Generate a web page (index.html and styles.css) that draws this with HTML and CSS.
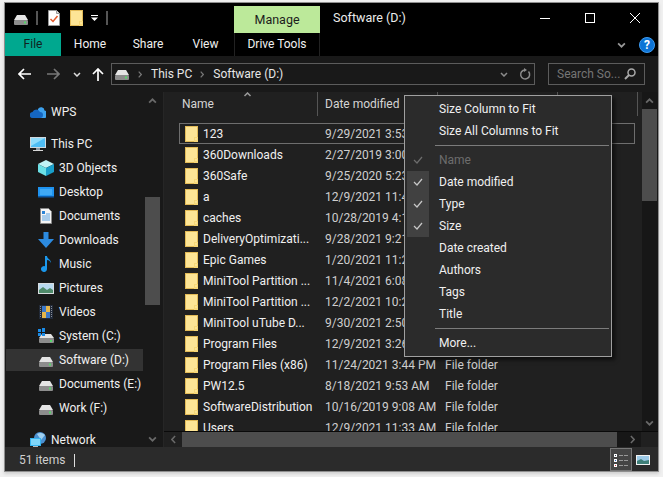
FILE: index.html
```html
<!DOCTYPE html>
<html lang="en">
<head>
<meta charset="utf-8">
<title>Software (D:)</title>
<link rel="stylesheet" href="styles.css">
</head>
<body>
<svg class="defs" xmlns="http://www.w3.org/2000/svg">
  <symbol id="folder" viewBox="0 0 13 16"><rect width="13" height="16" fill="#e3bb57"/><rect x="1" y="1" width="11" height="14" fill="#fde596"/><path d="M9 11h4v5H9z" fill="#f7d878"/><path d="M10 12h2v2h-2z" fill="#fde596"/></symbol>
  <symbol id="drive" viewBox="0 0 14 10"><path d="M3 0h8l3 5H0z" fill="#e4e4e4"/><rect y="5" width="14" height="5" rx="1" fill="#8d8d8d"/><rect x="10" y="6.5" width="2" height="2" fill="#57d86a"/></symbol>
  <symbol id="chev" viewBox="0 0 8 5"><path d="M1 1l3 3 3-3" fill="none" stroke="currentColor" stroke-width="1.5"/></symbol>
  <symbol id="crumb" viewBox="0 0 4 7"><path d="M.7.7l2.6 2.8L.7 6.3" fill="none" stroke="currentColor" stroke-width="1.2"/></symbol>
  <symbol id="check" viewBox="0 0 10 8"><path d="M1 4l3 3 5-6" fill="none" stroke="currentColor" stroke-width="1.2"/></symbol>
</svg>

<div class="window">
  <header class="titlebar">
    <div class="qat">
      <svg class="drive"><use href="#drive"/></svg>
      <span class="qat-sep"></span>
      <svg class="qat-doc" viewBox="0 0 12 16"><path d="M.5.5h8l3 3v12H.5z" fill="#fff" stroke="#999"/><path d="M8.5.5v3h3" fill="#ddd" stroke="#999"/><path d="M2.5 9l2.5 2.5L9.500 6" fill="none" stroke="#e2582a" stroke-width="1.500"/></svg>
      <svg class="folder qat-folder"><use href="#folder"/></svg>
      <svg class="qat-drop" viewBox="0 0 7 6"><path d="M0 0h7v1H0z" fill="#fff"/><path d="M0 2.500h7L3.500 6z" fill="#fff"/></svg>
      <span class="qat-sep"></span>
    </div>
    <div class="manage">Manage</div>
    <div class="title">Software (D:)</div>
    <div class="controls">
      <span class="ctl"><svg class="ctl-ic" viewBox="0 0 10 10"><path d="M0 5.500h10" stroke="#fff"/></svg></span>
      <span class="ctl"><svg class="ctl-ic" viewBox="0 0 10 10"><rect x=".5" y=".5" width="9" height="9" fill="none" stroke="#fff"/></svg></span>
      <span class="ctl"><svg class="ctl-ic" viewBox="0 0 10 10"><path d="M0 0l10 10M10 0L0 10" stroke="#fff"/></svg></span>
    </div>
  </header>

  <nav class="tabs">
    <span class="tab tab-file">File</span>
    <span class="tab">Home</span>
    <span class="tab">Share</span>
    <span class="tab tab-view">View</span>
    <span class="tab tab-ctx">Drive Tools</span>
    <span class="tabs-right">
      <svg class="ribbon-chev"><use href="#chev"/></svg>
      <span class="help">?</span>
    </span>
  </nav>

  <div class="addressbar">
    <svg class="nav-ic back" viewBox="0 0 13 12"><path d="M6 1L1 6l5 5M1 6h12" fill="none" stroke="#fff" stroke-width="1.700"/></svg>
    <svg class="nav-ic forward" viewBox="0 0 13 12"><path d="M7 1l5 5-5 5M12 6H0" fill="none" stroke="#777" stroke-width="1.700"/></svg>
    <svg class="recent"><use href="#chev"/></svg>
    <svg class="nav-ic up" viewBox="0 0 12 13"><path d="M1 6l5-5 5 5M6 1v12" fill="none" stroke="#fff" stroke-width="1.700"/></svg>
    <div class="address">
      <svg class="drive"><use href="#drive"/></svg>
      <svg class="crumb crumb-a"><use href="#crumb"/></svg>
      <span class="crumb-text">This PC</span>
      <svg class="crumb crumb-b"><use href="#crumb"/></svg>
      <span class="crumb-text">Software (D:)</span>
      <svg class="addr-chev"><use href="#chev"/></svg>
      <svg class="refresh" viewBox="0 0 12 13"><path d="M9.500 3.500a4.500 4.500 0 1 1-3.500-1.500" fill="none" stroke="#8c8c8c" stroke-width="1.500"/><path d="M5 0v4l3-2z" fill="#8c8c8c"/></svg>
    </div>
    <div class="search">
      <span>Search So...</span>
      <svg class="mag" viewBox="0 0 12 12"><circle cx="7.500" cy="4.500" r="3.500" fill="none" stroke="#aaa" stroke-width="1.500"/><path d="M5 7l-4 4" stroke="#aaa" stroke-width="2"/></svg>
    </div>
  </div>

  <div class="main">
    <aside class="nav">
      <div class="tree">
        <div class="item root">
          <svg class="ic" viewBox="0 0 16 12"><path d="M8 3a3.500 3.500 0 0 1 6.500 1.500A3.500 3.500 0 0 1 13 12H6z" fill="#3da1ee"/><path d="M3 12a3 3 0 0 1-.5-6A4 4 0 0 1 10 6a3 3 0 0 1 0 6z" fill="#1566c2"/></svg>
          <span>WPS</span>
        </div>
        <div class="item root gap">
          <svg class="ic" viewBox="0 0 16 16"><rect y="1" width="16" height="11" fill="#cfd8de"/><rect x="1" y="2" width="14" height="9" fill="#4fbdf4"/><path d="M1 2h14L1 10z" fill="#8fdcfb"/><path d="M6 12h4v2H6z" fill="#8d9aa3"/><path d="M3 14h10v1H3z" fill="#d8d8d8"/></svg>
          <span>This PC</span>
        </div>
        <div class="item child">
          <svg class="ic" viewBox="0 0 16 16"><path d="M8 0l8 4-8 4-8-4z" fill="#c2f3f6"/><path d="M0 4l8 4v8l-8-4z" fill="#6be0e6"/><path d="M16 4L8 8v8l8-4z" fill="#199fca"/></svg>
          <span>3D Objects</span>
        </div>
        <div class="item child">
          <svg class="ic" viewBox="0 0 16 16"><rect y="3" width="16" height="10" fill="#1e93f0"/><rect y="12" width="16" height="1.500" fill="#0c5aa8"/><path d="M2 5h12v6H2z" fill="#3fa9f5"/></svg>
          <span>Desktop</span>
        </div>
        <div class="item child">
          <svg class="ic" viewBox="0 0 16 16"><path d="M2.500.5h8l3 3v12h-11z" fill="#f4f4f4" stroke="#888"/><path d="M4 3h3v3H4z" fill="#2a83d6"/><path d="M8 6h4M4 8h8M4 10h8M4 12h8" stroke="#5da4e2"/></svg>
          <span>Documents</span>
        </div>
        <div class="item child">
          <svg class="ic" viewBox="0 0 16 16"><path d="M5.500 0h5v7H16l-8 9-8-9h5.500z" fill="#2c8be0"/></svg>
          <span>Downloads</span>
        </div>
        <div class="item child">
          <svg class="ic" viewBox="0 0 16 16"><path d="M7 0h2c0 3 4 3 4 7-1-2-2-3-4-3v9a3 3 0 1 1-2-2.800z" fill="#1b97ea"/></svg>
          <span>Music</span>
        </div>
        <div class="item child">
          <svg class="ic" viewBox="0 0 16 16"><rect y="3" width="16" height="11" fill="#d8dde0"/><rect x="1" y="4" width="14" height="9" fill="#b8d9ee"/><path d="M1 10l4-3 4 3 3-2 3 2v3H1z" fill="#4f8a6a"/></svg>
          <span>Pictures</span>
        </div>
        <div class="item child">
          <svg class="ic" viewBox="0 0 16 16"><rect x="1" y="1" width="14" height="14" fill="#222a38"/><rect x="4" y="2" width="4" height="6" fill="#3c78c8"/><rect x="8" y="2" width="4" height="6" fill="#e5b54a"/><rect x="4" y="8" width="4" height="6" fill="#e5b54a"/><rect x="8" y="8" width="4" height="6" fill="#3c78c8"/><path d="M2.500 2v12M13.500 2v12" stroke="#8a8f99" stroke-dasharray="1 1"/></svg>
          <span>Videos</span>
        </div>
        <div class="item child">
          <svg class="ic" viewBox="0 0 16 16"><path d="M4 6h9l3 4H1z" fill="#e4e4e4"/><rect x="1" y="10" width="15" height="5" rx="1" fill="#8d8d8d"/><rect x="12" y="12" width="2" height="2" fill="#57d86a"/><path d="M0 1h3v3H0zM4 0h3v4H4zM0 5h3v3H0zM4 5h3v3H4z" fill="#1a8ce8"/></svg>
          <span>System (C:)</span>
        </div>
        <div class="item child selected">
          <svg class="ic"><use href="#drive" x="1" y="5" width="14" height="10"/></svg>
          <span>Software (D:)</span>
        </div>
        <div class="item child">
          <svg class="ic"><use href="#drive" x="1" y="5" width="14" height="10"/></svg>
          <span>Documents (E:)</span>
        </div>
        <div class="item child">
          <svg class="ic"><use href="#drive" x="1" y="5" width="14" height="10"/></svg>
          <span>Work (F:)</span>
        </div>
        <div class="item root gap">
          <svg class="ic" viewBox="0 0 16 16"><circle cx="10" cy="6" r="6" fill="#4a90d0"/><path d="M7 2a6 6 0 0 1 8 1L11 8z" fill="#9fd0f0"/><rect y="6" width="11" height="8" fill="#36b4f0"/><rect x="1" y="7" width="9" height="6" fill="#7fd6fa"/><path d="M3 14h5v2H3z" fill="#bbb"/></svg>
          <span>Network</span>
        </div>
      </div>
      <div class="vscroll">
        <span class="arrow"><svg class="arrow-up"><use href="#chev"/></svg></span>
        <span class="track-a"></span>
        <span class="thumb nav-thumb"></span>
        <span class="track-b"></span>
        <span class="arrow"><svg class="arrow-dn"><use href="#chev"/></svg></span>
      </div>
    </aside>

    <section class="files">
      <div class="files-top">
        <div class="listing">
          <div class="head">
            <span class="hcell hname">Name</span>
            <span class="hcell">Date modified</span>
            <span class="hcell"></span>
            <span class="hcell"></span>
            <svg class="sort"><use href="#chev"/></svg>
          </div>
          <div class="rows">
            <div class="row focus under"><span class="fname"><svg class="folder"><use href="#folder"/></svg>123</span><span class="cell">9/29/2021 3:53 PM</span></div>
            <div class="row under"><span class="fname"><svg class="folder"><use href="#folder"/></svg>360Downloads</span><span class="cell">2/27/2019 3:00 PM</span></div>
            <div class="row under"><span class="fname"><svg class="folder"><use href="#folder"/></svg>360Safe</span><span class="cell">9/25/2020 5:23 PM</span></div>
            <div class="row under"><span class="fname"><svg class="folder"><use href="#folder"/></svg>a</span><span class="cell">12/9/2021 11:40 AM</span></div>
            <div class="row under"><span class="fname"><svg class="folder"><use href="#folder"/></svg>caches</span><span class="cell">10/28/2019 4:14 PM</span></div>
            <div class="row under"><span class="fname"><svg class="folder"><use href="#folder"/></svg>DeliveryOptimizati...</span><span class="cell">9/28/2021 9:21 AM</span></div>
            <div class="row under"><span class="fname"><svg class="folder"><use href="#folder"/></svg>Epic Games</span><span class="cell">1/20/2021 11:25 AM</span></div>
            <div class="row under"><span class="fname"><svg class="folder"><use href="#folder"/></svg>MiniTool Partition ...</span><span class="cell">11/4/2021 6:08 PM</span></div>
            <div class="row under"><span class="fname"><svg class="folder"><use href="#folder"/></svg>MiniTool Partition ...</span><span class="cell">12/2/2021 10:26 AM</span></div>
            <div class="row under"><span class="fname"><svg class="folder"><use href="#folder"/></svg>MiniTool uTube D...</span><span class="cell">9/30/2021 2:50 PM</span></div>
            <div class="row under"><span class="fname"><svg class="folder"><use href="#folder"/></svg>Program Files</span><span class="cell">12/9/2021 3:26 PM</span></div>
            <div class="row"><span class="fname"><svg class="folder"><use href="#folder"/></svg>Program Files (x86)</span><span class="cell">11/24/2021 3:44 PM</span><span class="cell">File folder</span></div>
            <div class="row"><span class="fname"><svg class="folder"><use href="#folder"/></svg>PW12.5</span><span class="cell">8/18/2021 9:53 AM</span><span class="cell">File folder</span></div>
            <div class="row"><span class="fname"><svg class="folder"><use href="#folder"/></svg>SoftwareDistribution</span><span class="cell">10/16/2019 9:08 AM</span><span class="cell">File folder</span></div>
            <div class="row"><span class="fname"><svg class="folder"><use href="#folder"/></svg>Users</span><span class="cell">12/9/2021 11:33 AM</span><span class="cell">File folder</span></div>
          </div>
        </div>
        <div class="vscroll vscroll-files">
          <span class="arrow"><svg class="arrow-up"><use href="#chev"/></svg></span>
          <span class="thumb files-thumb"></span>
          <span class="track-c"></span>
          <span class="arrow"><svg class="arrow-dn"><use href="#chev"/></svg></span>
        </div>
      </div>
      <div class="hscroll">
        <span class="harrow"><svg class="crumb-lg flip"><use href="#crumb"/></svg></span>
        <span class="hthumb"></span>
        <span class="harrow harrow-r"><svg class="crumb-lg"><use href="#crumb"/></svg></span>
        <span class="corner"></span>
      </div>
    </section>
  </div>

  <footer class="status">
    <span class="count">51 items</span>
    <span class="status-sep"></span>
    <span class="views">
      <span class="view-btn active">
        <svg class="view-ic" viewBox="0 0 16 16"><rect x="1" y="2" width="3" height="3" fill="#fff"/><rect x="1" y="7" width="3" height="3" fill="#fff"/><rect x="1" y="12" width="3" height="3" fill="#fff"/><rect x="2" y="3" width="1" height="1" fill="#345"/><rect x="2" y="8" width="1" height="1" fill="#36c"/><rect x="2" y="13" width="1" height="1" fill="#c33"/><path d="M6 3.500h4M11 3.500h4M6 8.500h4M11 8.500h4M6 13.500h4M11 13.500h4" stroke="#999"/></svg>
      </span>
      <span class="view-btn view-large">
        <svg class="thumb-ic" viewBox="0 0 14 10"><rect width="14" height="10" fill="#f2f2f2"/><rect x="1" y="1" width="12" height="8" fill="#9cc9e6"/><path d="M1 6l4-2 3 2 5-1v4H1z" fill="#3f7f78"/></svg>
      </span>
    </span>
  </footer>

  <div class="menu">
    <div class="mi"><span class="mc"></span><span class="ml">Size Column to Fit</span></div>
    <div class="mi"><span class="mc"></span><span class="ml">Size All Columns to Fit</span></div>
    <div class="msep"></div>
    <div class="mi disabled"><span class="mc"><svg class="mcheck"><use href="#check"/></svg></span><span class="ml">Name</span></div>
    <div class="mi"><span class="mc on"><svg class="mcheck"><use href="#check"/></svg></span><span class="ml">Date modified</span></div>
    <div class="mi"><span class="mc on"><svg class="mcheck"><use href="#check"/></svg></span><span class="ml">Type</span></div>
    <div class="mi"><span class="mc on"><svg class="mcheck"><use href="#check"/></svg></span><span class="ml">Size</span></div>
    <div class="mi"><span class="mc"></span><span class="ml">Date created</span></div>
    <div class="mi"><span class="mc"></span><span class="ml">Authors</span></div>
    <div class="mi"><span class="mc"></span><span class="ml">Tags</span></div>
    <div class="mi"><span class="mc"></span><span class="ml">Title</span></div>
    <div class="msep"></div>
    <div class="mi"><span class="mc"></span><span class="ml">More...</span></div>
  </div>
</div>
</body>
</html>
```

FILE: styles.css
```css
* { box-sizing: border-box; }
html, body { margin: 0; height: 100%; }
body {
  background: #f0f0f0;
  overflow: hidden;
  font: 12px/16px Roboto, "Liberation Sans", sans-serif;
  color: #f0f0f0;
  padding: 3px 5px 0;
}
.defs { display: none; }
svg { display: block; flex: none; }

.window {
  position: relative;
  width: 653px;
  height: 468px;
  display: flex;
  flex-direction: column;
  background: #191919;
  box-shadow: 0 0 0 1px #8f8f8f, 0 2px 3px 1px #cfcfcf;
}

/* title bar */
.titlebar {
  height: 30px;
  background: #000;
  display: flex;
  align-items: center;
  flex: none;
}
.qat {
  width: 229px;
  display: flex;
  align-items: center;
  padding-left: 9px;
}
.drive { width: 14px; height: 10px; }
.qat .drive { margin-top: 3px; }
.qat-sep { width: 2px; height: 14px; background: #555; margin-left: 8px; }
.qat-doc { width: 12px; height: 16px; margin-left: 10px; }
.folder { width: 13px; height: 16px; }
.qat-folder { margin-left: 10px; }
.qat-drop { width: 7px; height: 6px; margin-left: 8px; }
.manage {
  align-self: flex-end;
  width: 86px;
  height: 27px;
  background: #bce99a;
  color: #1c1c1c;
  text-align: center;
  line-height: 28px;
  font-size: 12.5px;
}
.title { margin-left: 13px; color: #ececec; font-size: 12.5px; }
.controls { margin-left: auto; display: flex; margin-right: 1px; }
.ctl { width: 45px; height: 30px; display: flex; align-items: center; justify-content: center; }
.ctl-ic { width: 10px; height: 10px; }

/* tabs */
.tabs {
  height: 23px;
  flex: none;
  display: flex;
  background: #000;
  align-items: stretch;
}
.tab { width: 58px; text-align: center; line-height: 23px; color: #f0f0f0; }
.tab-file { width: 56px; background: #00a88f; color: #10211e; }
.tab-view { width: 57px; }
.tab-ctx { width: 86px; border-left: 1px solid #222; border-right: 1px solid #222; }
.tabs-right { margin-left: auto; display: flex; align-items: center; padding-right: 3px; }
.ribbon-chev { width: 9px; height: 6px; color: #999; }
.help {
  width: 16px;
  height: 16px;
  margin-left: 13px;
  border-radius: 50%;
  background: #0d74d6;
  border: 1px solid #3d9bf0;
  color: #fff;
  font-weight: 700;
  font-size: 12px;
  line-height: 14px;
  text-align: center;
}

/* address bar */
.addressbar {
  height: 36px;
  flex: none;
  display: flex;
  align-items: center;
  background: #191919;
}
.nav-ic { height: 12px; width: 13px; }
.back { margin-left: 13px; }
.forward { margin-left: 16px; }
.recent { width: 8px; height: 5px; margin-left: 13px; color: #ddd; }
.up { width: 12px; height: 13px; margin-left: 11px; margin-right: 7px; }
.address {
  width: 424px;
  height: 22px;
  border: 1px solid #5c5c5c;
  display: flex;
  align-items: center;
  padding-left: 3px;
  color: #e6e6e6;
}
.address .drive { margin-top: 2px; }
.crumb { width: 4px; height: 7px; color: #777; }
.crumb-a { margin: 0 9px 0 9px; }
.crumb-b { margin: 0 9px 0 8px; }
.addr-chev { width: 8px; height: 5px; margin-left: auto; color: #8c8c8c; }
.refresh { width: 12px; height: 13px; margin-left: 11px; margin-right: 3px; }
.search {
  width: 97px;
  height: 22px;
  margin-left: 13px;
  border: 1px solid #5c5c5c;
  display: flex;
  align-items: center;
  padding-left: 8px;
  color: #757575;
}
.mag { width: 12px; height: 12px; margin-left: auto; margin-right: 8px; }

/* main */
.main { height: 355px; flex: none; display: flex; }
.nav {
  width: 159px;
  flex: none;
  display: flex;
  background: #191919;
  border-right: 1px solid #262626;
  padding-right: 3px;
}
.tree { width: 140px; padding: 8px 2px 0 1px; overflow: hidden; }
.item { height: 24px; display: flex; align-items: center; color: #f0f0f0; white-space: nowrap; }
.ic { width: 16px; height: 16px; margin-right: 5px; }
.root { padding-left: 24px; }
.child { padding-left: 32px; }
.gap { margin-top: 8px; }
.selected { background: #333; height: 22px; margin: 1px 0; }

.vscroll { width: 15px; flex: none; display: flex; flex-direction: column; }
.arrow { height: 17px; display: flex; align-items: center; justify-content: center; color: #6a6a6a; flex: none; }
.arrow-up { width: 9px; height: 6px; transform: scaleY(-1); }
.arrow-dn { width: 9px; height: 6px; }
.track-a { height: 88px; flex: none; }
.track-b, .track-c { flex: 1; }
.thumb { background: #4d4d4d; flex: none; }
.nav-thumb { height: 108px; }
.files-thumb { height: 92px; }

/* files */
.files { flex: 1; display: flex; flex-direction: column; background: #202020; min-width: 0; }
.files-top { height: 339px; flex: none; display: flex; }
.listing { flex: 1; min-width: 0; overflow: hidden; }
.vscroll-files { width: 16px; background: #171717; padding-right: 1px; }
.head {
  position: relative;
  height: 24px;
  padding-left: 15px;
  display: grid;
  grid-template-columns: 139px 120px 120px 80px;
}
.hcell {
  border-right: 1px solid #555;
  padding-left: 7px;
  line-height: 24px;
  color: #d4d4d4;
  white-space: nowrap;
  overflow: hidden;
}
.hname { padding-left: 3px; }
.sort { position: absolute; left: 79px; top: 0; width: 9px; height: 5px; color: #9a9a9a; transform: scaleY(-1); }
.rows { padding: 7px 0 0 15px; }
.row {
  width: 456px;
  height: 21px;
  border: 1px solid transparent;
  display: grid;
  grid-template-columns: 138px 120px 120px 1fr;
  align-items: center;
}
.under { grid-template-columns: 138px 86px 1fr; }
.focus { border-color: #6e6e6e; }
.fname { display: flex; align-items: center; gap: 5px; padding-left: 5px; white-space: nowrap; overflow: hidden; color: #f0f0f0; }
.cell { padding-left: 7px; white-space: nowrap; overflow: hidden; color: #cfcfcf; }

.hscroll { height: 16px; flex: none; display: flex; border-top: 1px solid #0a0a0a; }
.harrow { width: 18px; display: flex; align-items: center; justify-content: center; color: #6a6a6a; background: #202020; flex: none; }
.harrow-r { width: 24px; background: #171717; justify-content: flex-end; padding-right: 6px; }
.crumb-lg { width: 5px; height: 9px; }
.flip { transform: scaleX(-1); }
.hthumb { flex: 1; background: #4d4d4d; }
.corner { width: 17px; background: #202020; flex: none; }

/* status */
.status {
  flex: 1;
  display: flex;
  align-items: center;
  background: #2b2b2b;
  padding-left: 14px;
  color: #cfcfcf;
}
.count { padding-top: 2px; }
.status-sep { width: 1px; height: 13px; background: #ddd; margin: 2px 0 0 9px; }
.views { margin-left: auto; display: flex; align-self: stretch; padding: 1px 8px 0 0; }
.view-btn { width: 22px; display: flex; align-items: center; justify-content: center; }
.view-large { width: 18px; justify-content: flex-end; }
.active { background: #454545; border: 1px solid #777; }
.view-ic { width: 16px; height: 16px; }
.thumb-ic { width: 14px; height: 10px; }

/* context menu */
.menu {
  position: absolute;
  left: 399px;
  top: 92px;
  width: 208px;
  height: 262px;
  background: #2b2b2b;
  border: 1px solid #a0a0a0;
  box-shadow: 3px 3px 4px rgba(0, 0, 0, .55);
  padding: 2px 0;
}
.mi { height: 22px; display: flex; align-items: stretch; padding-left: 2px; }
.mc { width: 22px; display: flex; align-items: center; justify-content: center; color: #c8c8c8; }
.mc.on { background: #414141; }
.mcheck { width: 10px; height: 8px; }
.ml { margin-left: 10px; line-height: 22px; color: #f0f0f0; }
.disabled .ml, .disabled .mc { color: #6d6d6d; }
.msep { height: 7px; margin: 0 2px 0 30px; }
.msep::after { content: ""; display: block; height: 1px; background: #7c7c7c; transform: translateY(3px); }
```
